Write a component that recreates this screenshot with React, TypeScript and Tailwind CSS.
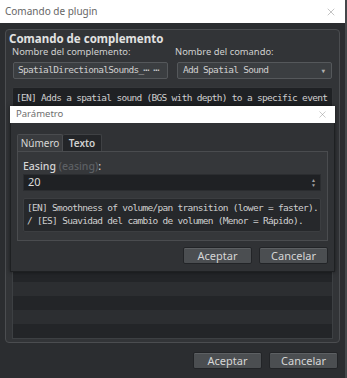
import { X } from 'lucide-react';

const mono = "font-['DejaVu_Sans_Mono',monospace] text-[9.5px] tracking-[-0.7px] whitespace-nowrap";

function Btn({ label }: { label: string }) {
  return (
    <button className="w-[69px] h-[17px] rounded-[2px] border border-[#222427] bg-[#4b4e51] text-[11px] leading-none text-[#d6d6d6] shadow-[inset_0_1px_0_#5d6063]">
      {label}
    </button>
  );
}

function ParamDialog() {
  return (
    <div className="absolute left-[10px] top-[106px] w-[325px] h-[166px] flex flex-col shadow-[0_0_4px_rgba(0,0,0,0.5)]">
      {/* Title */}
      <div className="h-[18px] bg-white flex items-center justify-between pl-[6px] pr-[7px]">
        <span className="text-[9.5px] text-[#6e6e6e]">Parámetro</span>
        <X size={11} strokeWidth={1} className="text-[#8a8a8a]" />
      </div>

      {/* Body */}
      <div className="flex-1 bg-[#303235] border-x border-b border-[#1e2022] px-[6px] pt-[11px] pb-[7px] flex flex-col">
        {/* Tabs */}
        <div className="flex h-[17px]">
          <div className="w-[46px] h-full bg-[#393b3e] border-t border-l border-r border-[#4a4c4f] rounded-t-[2px] flex items-center justify-center text-[10px] text-[#d8d8d8]">
            Número
          </div>
          <div className="w-[39px] h-full bg-[#232528] border-t border-r border-[#3f4144] rounded-t-[2px] flex items-center justify-center text-[10px] font-semibold text-[#d0d0d0]">
            Texto
          </div>
        </div>

        {/* Panel */}
        <div className="h-[90px] bg-[#35373a] border border-[#4a4c4f] pl-[5px] pr-[6px] pt-[8px] flex flex-col">
          <div className="h-[13px] leading-[13px] text-[10.5px] font-medium text-[#d6d6d6]">
            Easing <span className="text-[#5d6064]">(easing)</span>:
          </div>
          <div className="mt-[1px] h-[17px] bg-[#1f2124] border border-[#2b2d30] flex items-center justify-between pl-[4px] pr-[4px]">
            <span className="text-[11px] text-[#dcdcdc]">20</span>
            <div className="flex flex-col items-center leading-none text-[#a0a0a0] text-[5px]">
              <span>▲</span>
              <span>▼</span>
            </div>
          </div>
          <div className={`mt-[7px] h-[34px] bg-[#26282b] border border-[#3c3e41] rounded-[2px] pl-[3px] pt-[2px] ${mono} leading-[13px] text-[#cfcfcf]`}>
            <div>[EN] Smoothness of volume/pan transition (lower = faster).</div>
            <div>/ [ES] Suavidad del cambio de volumen (Menor = Rápido).</div>
          </div>
        </div>

        {/* Buttons */}
        <div className="mt-[6px] flex justify-end gap-[7px]">
          <Btn label="Aceptar" />
          <Btn label="Cancelar" />
        </div>
      </div>
    </div>
  );
}

export default function App() {
  const rows = Array.from({ length: 15 }, (_, i) => i);
  return (
    <div className="relative w-[347px] h-[378px] overflow-hidden bg-[#2b2d30] font-['Noto_Sans',sans-serif] flex">
      <div className="w-[345px] flex flex-col">
        {/* Title bar */}
        <div className="h-[23px] bg-white flex items-center justify-between pl-[5px] pr-[8px]">
          <span className="text-[10px] text-[#666]">Comando de plugin</span>
          <X size={12} strokeWidth={1} className="text-[#888]" />
        </div>

        <div className="flex-1 px-[5px] pt-[6px] flex flex-col">
          {/* Group box */}
          <div className="h-[314px] bg-[#323437] border border-[#4b4d50] rounded-[4px] pl-[6px] pr-[6px] pt-[2px] pb-[3px] flex flex-col">
            <div className="h-[14px] leading-[14px] text-[11.5px] font-bold text-[#e2e2e2] -ml-[3px]">
              Comando de complemento
            </div>
            <div className="h-[12px] leading-[12px] flex text-[9.4px] text-[#d0d0d0]">
              <div className="w-[163px]">Nombre del complemento:</div>
              <div>Nombre del comando:</div>
            </div>
            <div className="mt-[4px] flex gap-[9px] pl-[1px]">
              <div className={`w-[155px] h-[17px] bg-[#3b3e41] border border-[#55585b] rounded-[2px] flex items-center pl-[4px] ${mono} text-[#cfcfcf]`}>
                SpatialDirectionalSounds_⋯ ⋯
              </div>
              <div className={`w-[155px] h-[17px] bg-[#3b3e41] border border-[#55585b] rounded-[2px] flex items-center justify-between pl-[5px] pr-[6px] ${mono} text-[#cfcfcf]`}>
                <span>Add Spatial Sound</span>
                <span className="text-[6px] text-[#b0b0b0] tracking-normal">▼</span>
              </div>
            </div>
            <div className={`mt-[8px] h-[34px] bg-[#1f2124] border border-[#35373a] rounded-[2px] pl-[3px] pt-[3px] ${mono} leading-[13px] text-[#cfcfcf]`}>
              [EN] Adds a spatial sound (BGS with depth) to a specific event
            </div>
            <div className="mt-[6px] h-[212px] border border-[#3d4043] flex flex-col overflow-hidden">
              {rows.map((i) => (
                <div key={i} className={`h-[14px] shrink-0 ${i % 2 === 0 ? 'bg-[#232528]' : 'bg-[#2c2e31]'}`} />
              ))}
            </div>
          </div>

          {/* Main buttons */}
          <div className="mt-[9px] flex justify-end gap-[7px] pr-[2px]">
            <Btn label="Aceptar" />
            <Btn label="Cancelar" />
          </div>
        </div>
      </div>
      <div className="w-[2px] bg-[#45484b]" />

      <ParamDialog />
    </div>
  );
}
